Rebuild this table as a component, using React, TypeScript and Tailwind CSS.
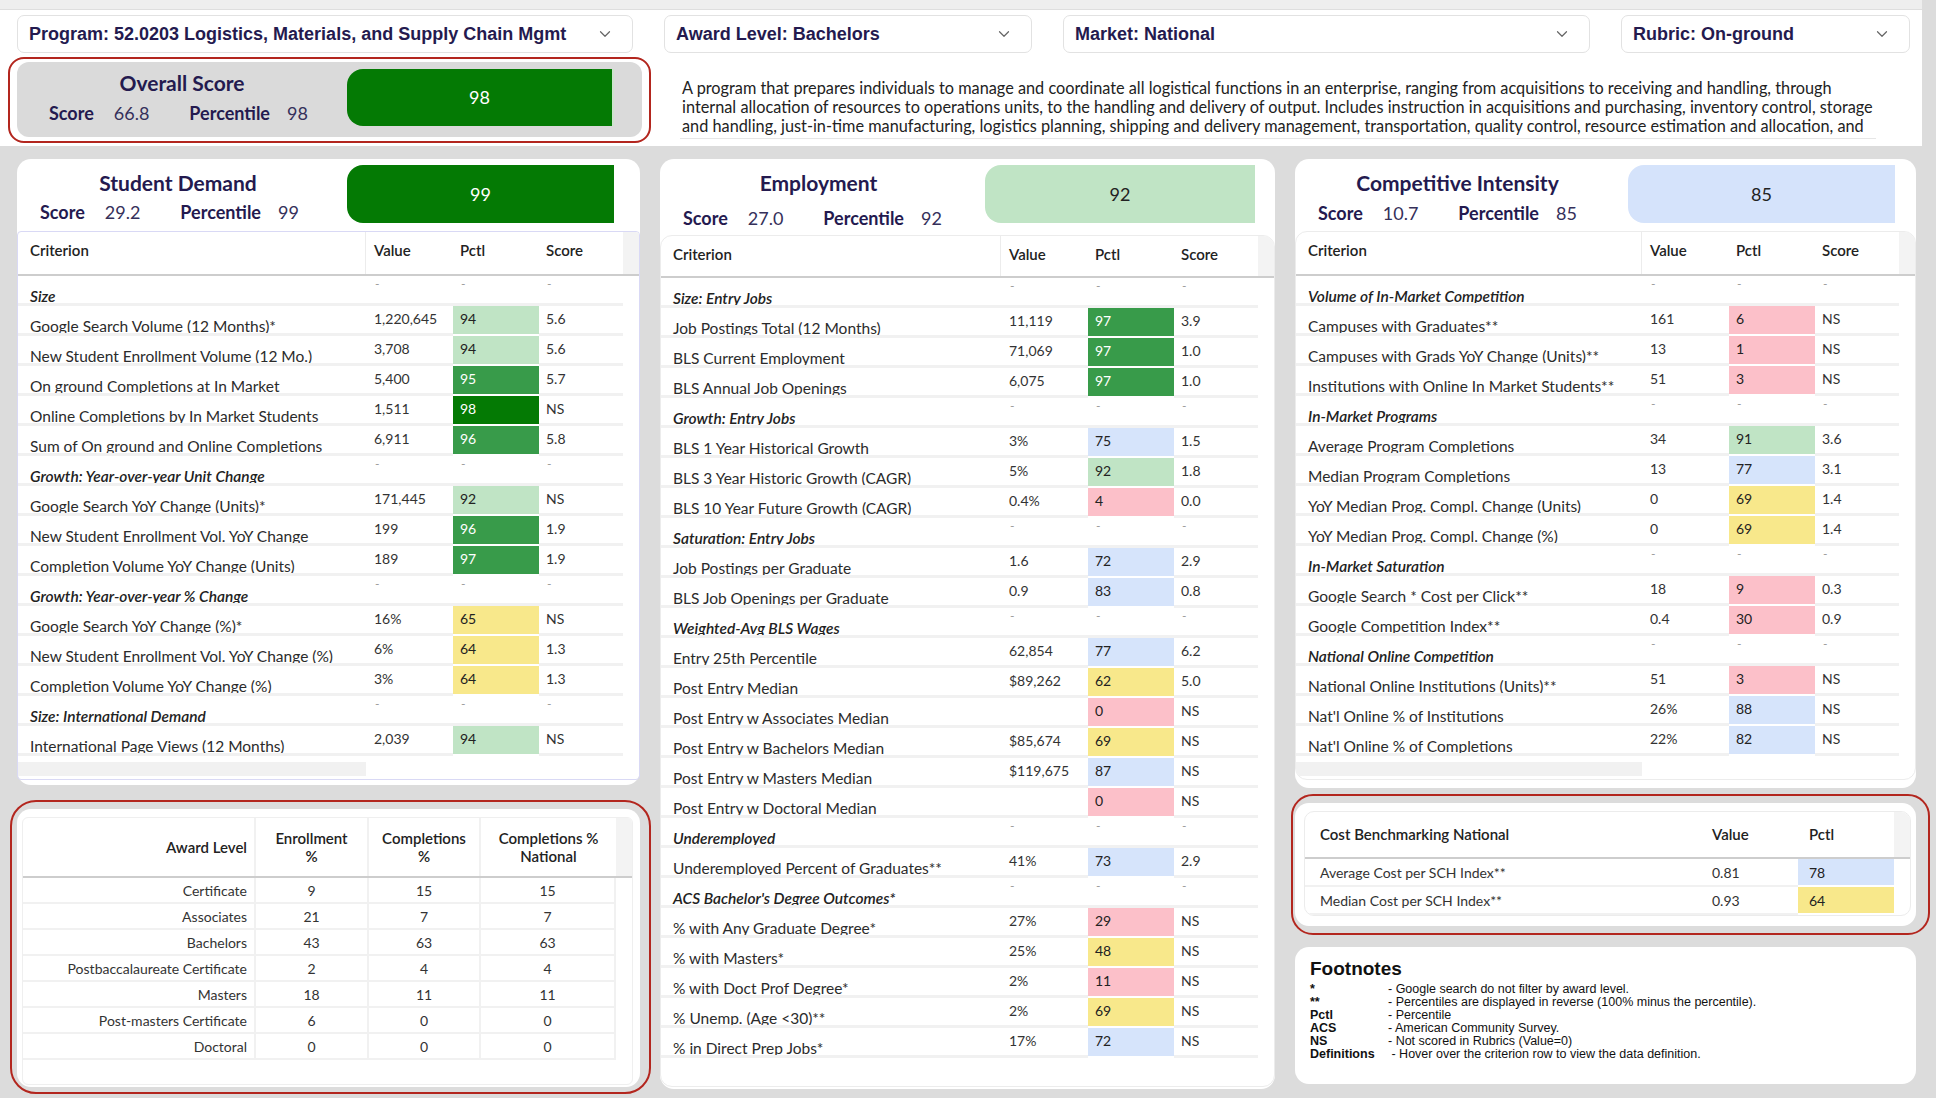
import { ChevronDown } from 'lucide-react';

type Tone = 'lg' | 'mg' | 'dg' | 'y' | 'b' | 'p';
type Row = [string] | [string, string, string, string, Tone];

const tones: Record<Tone, string> = {
    lg: 'bg-[#c0e4c5] text-[#222]',
    mg: 'bg-[#389b4a] text-white',
    dg: 'bg-[#047a04] text-white',
    y: 'bg-[#f8e88b] text-[#222]',
    b: 'bg-[#d6e4fb] text-[#222]',
    p: 'bg-[#fcc0c9] text-[#222]',
};

const demandRows: Row[] = [
    ['Size'],
    ['Google Search Volume (12 Months)*', '1,220,645', '94', '5.6', 'lg'],
    ['New Student Enrollment Volume (12 Mo.)', '3,708', '94', '5.6', 'lg'],
    ['On ground Completions at In Market', '5,400', '95', '5.7', 'mg'],
    ['Online Completions by In Market Students', '1,511', '98', 'NS', 'dg'],
    ['Sum of On ground and Online Completions', '6,911', '96', '5.8', 'mg'],
    ['Growth: Year-over-year Unit Change'],
    ['Google Search YoY Change (Units)*', '171,445', '92', 'NS', 'lg'],
    ['New Student Enrollment Vol. YoY Change', '199', '96', '1.9', 'mg'],
    ['Completion Volume YoY Change (Units)', '189', '97', '1.9', 'mg'],
    ['Growth: Year-over-year % Change'],
    ['Google Search YoY Change (%)*', '16%', '65', 'NS', 'y'],
    ['New Student Enrollment Vol. YoY Change (%)', '6%', '64', '1.3', 'y'],
    ['Completion Volume YoY Change (%)', '3%', '64', '1.3', 'y'],
    ['Size: International Demand'],
    ['International Page Views (12 Months)', '2,039', '94', 'NS', 'lg'],
];

const employmentRows: Row[] = [
    ['Size: Entry Jobs'],
    ['Job Postings Total (12 Months)', '11,119', '97', '3.9', 'mg'],
    ['BLS Current Employment', '71,069', '97', '1.0', 'mg'],
    ['BLS Annual Job Openings', '6,075', '97', '1.0', 'mg'],
    ['Growth: Entry Jobs'],
    ['BLS 1 Year Historical Growth', '3%', '75', '1.5', 'b'],
    ['BLS 3 Year Historic Growth (CAGR)', '5%', '92', '1.8', 'lg'],
    ['BLS 10 Year Future Growth (CAGR)', '0.4%', '4', '0.0', 'p'],
    ['Saturation: Entry Jobs'],
    ['Job Postings per Graduate', '1.6', '72', '2.9', 'b'],
    ['BLS Job Openings per Graduate', '0.9', '83', '0.8', 'b'],
    ['Weighted-Avg BLS Wages'],
    ['Entry 25th Percentile', '62,854', '77', '6.2', 'b'],
    ['Post Entry Median', '$89,262', '62', '5.0', 'y'],
    ['Post Entry w Associates Median', '', '0', 'NS', 'p'],
    ['Post Entry w Bachelors Median', '$85,674', '69', 'NS', 'y'],
    ['Post Entry w Masters Median', '$119,675', '87', 'NS', 'b'],
    ['Post Entry w Doctoral Median', '', '0', 'NS', 'p'],
    ['Underemployed'],
    ['Underemployed Percent of Graduates**', '41%', '73', '2.9', 'b'],
    ["ACS Bachelor's Degree Outcomes*"],
    ['% with Any Graduate Degree*', '27%', '29', 'NS', 'p'],
    ['% with Masters*', '25%', '48', 'NS', 'y'],
    ['% with Doct Prof Degree*', '2%', '11', 'NS', 'p'],
    ['% Unemp. (Age <30)**', '2%', '69', 'NS', 'y'],
    ['% in Direct Prep Jobs*', '17%', '72', 'NS', 'b'],
];

const competitionRows: Row[] = [
    ['Volume of In-Market Competition'],
    ['Campuses with Graduates**', '161', '6', 'NS', 'p'],
    ['Campuses with Grads YoY Change (Units)**', '13', '1', 'NS', 'p'],
    ['Institutions with Online In Market Students**', '51', '3', 'NS', 'p'],
    ['In-Market Programs'],
    ['Average Program Completions', '34', '91', '3.6', 'lg'],
    ['Median Program Completions', '13', '77', '3.1', 'b'],
    ['YoY Median Prog. Compl. Change (Units)', '0', '69', '1.4', 'y'],
    ['YoY Median Prog. Compl. Change (%)', '0', '69', '1.4', 'y'],
    ['In-Market Saturation'],
    ['Google Search * Cost per Click**', '18', '9', '0.3', 'p'],
    ['Google Competition Index**', '0.4', '30', '0.9', 'p'],
    ['National Online Competition'],
    ['National Online Institutions (Units)**', '51', '3', 'NS', 'p'],
    ["Nat'l Online % of Institutions", '26%', '88', 'NS', 'b'],
    ["Nat'l Online % of Completions", '22%', '82', 'NS', 'b'],
];

const awardRows = [
    ['Certificate', '9', '15', '15'],
    ['Associates', '21', '7', '7'],
    ['Bachelors', '43', '63', '63'],
    ['Postbaccalaureate Certificate', '2', '4', '4'],
    ['Masters', '18', '11', '11'],
    ['Post-masters Certificate', '6', '0', '0'],
    ['Doctoral', '0', '0', '0'],
];

const footnotes = [
    ['*', '- Google search do not filter by award level.'],
    ['**', '- Percentiles are displayed in reverse (100% minus the percentile).'],
    ['Pctl', '- Percentile'],
    ['ACS', '- American Community Survey.'],
    ['NS', '- Not scored in Rubrics (Value=0)'],
    ['Definitions', '\u00a0- Hover over the criterion row to view the data definition.'],
];

function Dropdown({ label, width }: { label: string; width: string }) {
    return (
        <div className={`${width} h-[38px] rounded-[7px] border border-[#e2e2e2] bg-white flex items-center justify-between pl-[11px] pr-[18px]`}>
            <span className="font-['Liberation_Sans',sans-serif] text-[18px] font-bold text-[#241a4f] whitespace-nowrap">{label}</span>
            <ChevronDown size={18} strokeWidth={1.6} className="text-[#666]" />
        </div>
    );
}

function ScoreLine({ score, pct, className }: { score: string; pct: string; className: string }) {
    return (
        <div className={`flex items-baseline text-[18px] leading-[18px] whitespace-nowrap ${className}`}>
            <span className="font-bold text-[#241a4f]">Score</span>
            <span className="ml-[20px] text-[#35305a]">{score}</span>
            <span className="ml-[40px] font-bold text-[#241a4f]">Percentile</span>
            <span className="ml-[17px] text-[#35305a]">{pct}</span>
        </div>
    );
}

function CardHeader({ title, score, pct, bar, tone, height, scoreMt, leftW, barW }: {
    title: string; score: string; pct: string; bar: string; tone: string;
    height: string; scoreMt: string; leftW: string; barW: string;
}) {
    return (
        <div className={`flex ${height}`}>
            <div className={`${leftW} pt-[12px]`}>
                <div className="text-center pr-[8px] text-[21px] leading-[24px] font-bold text-[#241a4f]">{title}</div>
                <ScoreLine score={score} pct={pct} className={`${scoreMt} pl-[23px]`} />
            </div>
            <div className={`${barW} mt-[6px] h-[58px] rounded-l-[16px] flex items-center justify-center text-[18px] ${tone}`}>
                {bar}
            </div>
        </div>
    );
}

function CriteriaTable({ rows, outline, head, strip }: { rows: Row[]; outline: string; head: string; strip: boolean }) {
    return (
        <div className={`border ${outline} overflow-hidden`}>
            <div className={`grid grid-cols-[1fr_87px_86px_84px_16px] ${head} border-b-2 border-[#cdcdcd] text-[15px] leading-[18px] font-semibold text-[#222]`}>
                <div className="pl-[12px] pt-[9px] border-r border-[#ececec]">Criterion</div>
                <div className="pl-[8px] pt-[9px]">Value</div>
                <div className="pl-[7px] pt-[9px]">Pctl</div>
                <div className="pl-[7px] pt-[9px]">Score</div>
                <div className="bg-[#f3f3f3]" />
            </div>
            {rows.map((r, i) => {
                const section = r.length === 1;
                return (
                    <div key={i} className="grid grid-cols-[1fr_87px_86px_84px_16px] h-[30px]">
                        <div className={`h-[30px] overflow-hidden border-b-[3px] border-[#f1f1f1] pl-[12px] pt-[11px] text-[15.5px] leading-[18px] whitespace-nowrap ${section ? 'font-semibold italic text-[#222]' : 'text-[#2b2b2b]'}`}>
                            {r[0]}
                        </div>
                        {section ? (
                            <>
                                <div className="border-b-[3px] border-[#f1f1f1] pl-[9px] pt-[1px] text-[12px] leading-[14px] text-[#999]">-</div>
                                <div className="border-b-[3px] border-[#f1f1f1] pl-[8px] pt-[1px] text-[12px] leading-[14px] text-[#999]">-</div>
                                <div className="border-b-[3px] border-[#f1f1f1] pl-[8px] pt-[1px] text-[12px] leading-[14px] text-[#999]">-</div>
                            </>
                        ) : (
                            <>
                                <div className="border-b-[3px] border-[#f1f1f1] pl-[8px] pt-[4px] text-[14px] leading-[17px] text-[#333] whitespace-nowrap">{r[1]}</div>
                                <div className={`border-b-2 border-white pl-[7px] pt-[4px] text-[14px] leading-[17px] ${tones[r[4]]}`}>{r[2]}</div>
                                <div className="border-b-[3px] border-[#f1f1f1] pl-[7px] pt-[4px] text-[14px] leading-[17px] text-[#333]">{r[3]}</div>
                            </>
                        )}
                        <div />
                    </div>
                );
            })}
            {strip ? (
                <div className="grid grid-cols-[1fr_87px_86px_84px_16px] pt-[6px] pb-[3px]">
                    <div className="h-[14px] bg-[#f1f1f1]" />
                </div>
            ) : (
                <div className="h-[28px]" />
            )}
        </div>
    );
}

function AwardTable() {
    return (
        <div className="mt-[15px] -ml-[7px] -mr-[11px] h-[294px] rounded-[26px] border-2 border-[#b3261e] pl-[5px] pr-[9px] pt-[7px]">
            <div className="h-[278px] rounded-[14px] bg-white pl-[5px] pr-[7px] pt-[8px]">
                <div className="border border-[#efefef] rounded-[6px] overflow-hidden">
                    <div className="grid grid-cols-[1fr_113px_112px_135px_16px] h-[60px] border-b-2 border-[#cdcdcd] text-[15px] leading-[18px] font-semibold text-[#222]">
                        <div className="flex items-center justify-end pr-[7px] border-r-2 border-[#f1f1f1]">Award Level</div>
                        <div className="flex items-center justify-center text-center border-r-2 border-[#f1f1f1]">Enrollment<br />%</div>
                        <div className="flex items-center justify-center text-center border-r-2 border-[#f1f1f1]">Completions<br />%</div>
                        <div className="flex items-center justify-center text-center">Completions %<br />National</div>
                        <div className="bg-[#f3f3f3]" />
                    </div>
                    {awardRows.map((r) => (
                        <div key={r[0]} className="grid grid-cols-[1fr_113px_112px_135px_16px] h-[26px] text-[14px] text-[#333]">
                            <div className="flex items-center justify-end pr-[7px] border-r-2 border-b-2 border-[#f1f1f1]">{r[0]}</div>
                            <div className="flex items-center justify-center border-r-2 border-b-2 border-[#f1f1f1]">{r[1]}</div>
                            <div className="flex items-center justify-center border-r-2 border-b-2 border-[#f1f1f1]">{r[2]}</div>
                            <div className="flex items-center justify-center border-r-2 border-b-2 border-[#f1f1f1]">{r[3]}</div>
                            <div />
                        </div>
                    ))}
                    <div className="h-[24px]" />
                </div>
            </div>
        </div>
    );
}

function CostTable() {
    return (
        <div className="mt-[6px] -ml-[4px] -mr-[14px] h-[141px] rounded-[22px] border-2 border-[#b3261e] pl-[2px] pr-[12px] pt-[7px]">
            <div className="h-[123px] rounded-[14px] bg-white pl-[9px] pr-[5px] pt-[8px]">
                <div className="border border-[#ececec] rounded-[10px] overflow-hidden">
                    <div className="grid grid-cols-[1fr_96px_96px_16px] h-[47px] border-b-2 border-[#cdcdcd] text-[15px] font-semibold text-[#222]">
                        <div className="flex items-center pl-[15px]">Cost Benchmarking National</div>
                        <div className="flex items-center pl-[10px]">Value</div>
                        <div className="flex items-center pl-[11px]">Pctl</div>
                        <div className="bg-[#f3f3f3]" />
                    </div>
                    {[
                        ['Average Cost per SCH Index**', '0.81', '78', tones.b],
                        ['Median Cost per SCH Index**', '0.93', '64', tones.y],
                    ].map((r) => (
                        <div key={r[0]} className="grid grid-cols-[1fr_96px_96px_16px] h-[28px] text-[14px] text-[#333]">
                            <div className="flex items-center pl-[15px] border-b-2 border-[#f1f1f1]">{r[0]}</div>
                            <div className="flex items-center pl-[10px] border-b-2 border-[#f1f1f1]">{r[1]}</div>
                            <div className={`flex items-center pl-[11px] border-b-2 border-white ${r[3]}`}>{r[2]}</div>
                            <div />
                        </div>
                    ))}
                </div>
            </div>
        </div>
    );
}

function Footnotes() {
    return (
        <div className="mt-[12px] h-[137px] rounded-[14px] bg-white pl-[15px] pt-[11px] font-['Liberation_Sans',sans-serif] text-[#111]">
            <div className="text-[19px] leading-[22px] font-bold">Footnotes</div>
            <div className="mt-[3px]">
                {footnotes.map((f) => (
                    <div key={f[0]} className="grid grid-cols-[78px_1fr] text-[12.5px] leading-[13px]">
                        <span className="font-bold">{f[0]}</span>
                        <span>{f[1]}</span>
                    </div>
                ))}
            </div>
        </div>
    );
}

export default function App() {
    return (
        <div className="w-[1936px] h-[1098px] overflow-hidden bg-[#dcdcdc] font-['Lato',sans-serif]">
            <div className="w-[1922px] bg-white">
                <div className="h-[10px] bg-[#eeeeee] border-b border-[#dedede]" />
                <div className="flex gap-[31px] pl-[17px] pt-[5px]">
                    <Dropdown label="Program: 52.0203 Logistics, Materials, and Supply Chain Mgmt" width="w-[616px]" />
                    <Dropdown label="Award Level: Bachelors" width="w-[368px]" />
                    <Dropdown label="Market: National" width="w-[527px]" />
                    <Dropdown label="Rubric: On-ground" width="w-[289px]" />
                </div>
                <div className="flex pt-[4px] pb-[3px]">
                    <div className="ml-[8px] w-[643px] h-[86px] rounded-[16px] border-2 border-[#b3261e] px-[7px] pt-[3px] pb-[4px]">
                        <div className="h-full rounded-[12px] bg-[#dadada] flex">
                            <div className="w-[330px] pt-[9px]">
                                <div className="text-center text-[21px] leading-[24px] font-bold text-[#241a4f]">Overall Score</div>
                                <ScoreLine score="66.8" pct="98" className="mt-[9px] pl-[32px]" />
                            </div>
                            <div className="mt-[7px] h-[57px] w-[267px] rounded-l-[16px] border-r-2 border-white/80 bg-[#047a04] text-white text-[18px] flex items-center justify-center">
                                98
                            </div>
                        </div>
                    </div>
                    <div className="ml-[29px] w-[1196px] h-[82px] pt-[21px] pl-[2px] border-b border-[#e6e6e6] overflow-hidden text-[16.3px] leading-[19px] text-[#222] whitespace-nowrap">
                        <div>A program that prepares individuals to manage and coordinate all logistical functions in an enterprise, ranging from acquisitions to receiving and handling, through</div>
                        <div>internal allocation of resources to operations units, to the handling and delivery of output. Includes instruction in acquisitions and purchasing, inventory control, storage</div>
                        <div>and handling, just-in-time manufacturing, logistics planning, shipping and delivery management, transportation, quality control, resource estimation and allocation, and</div>
                    </div>
                </div>
            </div>

            <div className="flex gap-[20px] pl-[17px] pt-[13px]">
                <div className="w-[623px] flex flex-col">
                    <div className="h-[626px] rounded-[14px] bg-white">
                        <CardHeader title="Student Demand" score="29.2" pct="99" bar="99" tone="bg-[#047a04] text-white"
                            height="h-[72px]" scoreMt="mt-[8px]" leftW="w-[330px]" barW="w-[267px]" />
                        <CriteriaTable rows={demandRows} outline="border-[#d9d9f5] rounded-[4px]" head="h-[44px]" strip />
                    </div>
                    <AwardTable />
                </div>

                <div className="w-[615px]">
                    <div className="h-[930px] rounded-[14px] bg-white">
                        <CardHeader title="Employment" score="27.0" pct="92" bar="92" tone="bg-[#c0e4c5] text-[#222]"
                            height="h-[76px]" scoreMt="mt-[14px]" leftW="w-[325px]" barW="w-[270px]" />
                        <CriteriaTable rows={employmentRows} outline="border-[#ececec] rounded-[12px]" head="h-[42px]" strip={false} />
                    </div>
                </div>

                <div className="w-[621px] flex flex-col">
                    <div className="h-[629px] rounded-[14px] bg-white">
                        <CardHeader title="Competitive Intensity" score="10.7" pct="85" bar="85" tone="bg-[#d5e3fb] text-[#222]"
                            height="h-[72px]" scoreMt="mt-[9px]" leftW="w-[333px]" barW="w-[267px]" />
                        <CriteriaTable rows={competitionRows} outline="border-[#ececec] rounded-[12px]" head="h-[44px]" strip />
                    </div>
                    <CostTable />
                    <Footnotes />
                </div>
            </div>
        </div>
    );
}
